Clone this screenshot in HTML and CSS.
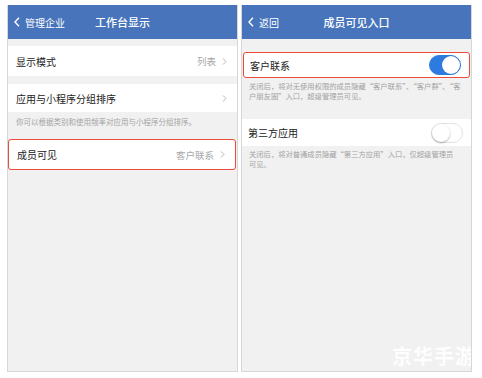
FILE: index.html
```html
<!DOCTYPE html>
<html lang="zh-CN">
<head>
    <meta charset="UTF-8">
    <meta name="viewport" content="width=device-width, initial-scale=1.0">
    <title>成员可见入口</title>
    <link rel="stylesheet" href="styles.css">
</head>
<body>
    <div class="screens">
        <div class="phone">
            <div class="nav">
                <div class="back">
                    <svg class="back-icon" width="6" height="10" viewBox="0 0 6 10"><polyline points="5,0.8 1,5 5,9.2" fill="none" stroke="#fff" stroke-width="1.4"/></svg>
                    <span>管理企业</span>
                </div>
                <div class="title">工作台显示</div>
                <div></div>
            </div>
            <div class="row row-first">
                <span class="label">显示模式</span>
                <span class="value">列表
                    <svg class="arrow" width="5" height="7" viewBox="0 0 5 7"><polyline points="1,0.5 4,3.5 1,6.5" fill="none" stroke="#b5b5b5" stroke-width="1"/></svg>
                </span>
            </div>
            <div class="row row-second">
                <span class="label">应用与小程序分组排序</span>
                <span class="value">
                    <svg class="arrow" width="5" height="7" viewBox="0 0 5 7"><polyline points="1,0.5 4,3.5 1,6.5" fill="none" stroke="#b5b5b5" stroke-width="1"/></svg>
                </span>
            </div>
            <div class="note note-left">你可以根据类别和使用频率对应用与小程序分组排序。</div>
            <div class="row row-mark">
                <span class="label">成员可见</span>
                <span class="value">客户联系
                    <svg class="arrow" width="5" height="7" viewBox="0 0 5 7"><polyline points="1,0.5 4,3.5 1,6.5" fill="none" stroke="#b5b5b5" stroke-width="1"/></svg>
                </span>
            </div>
        </div>

        <div class="phone phone-right">
            <div class="nav">
                <div class="back">
                    <svg class="back-icon" width="6" height="10" viewBox="0 0 6 10"><polyline points="5,0.8 1,5 5,9.2" fill="none" stroke="#fff" stroke-width="1.4"/></svg>
                    <span>返回</span>
                </div>
                <div class="title">成员可见入口</div>
                <div></div>
            </div>
            <div class="row row-mark row-switch first-switch">
                <span class="label">客户联系</span>
                <span class="switch on"></span>
            </div>
            <div class="note note-right">关闭后，将对无使用权限的成员隐藏“客户联系”、“客户群”、“客<br>户朋友圈”入口，超级管理员可见。</div>
            <div class="row row-switch second-switch">
                <span class="label">第三方应用</span>
                <span class="switch"></span>
            </div>
            <div class="note note-right">关闭后，将对普通成员隐藏“第三方应用”入口，仅超级管理员<br>可见。</div>
            <div class="watermark">京华手游</div>
        </div>
    </div>
</body>
</html>
```

FILE: styles.css
```css
body {
    margin: 0;
    background-color: #fff;
    font-family: "Noto Sans CJK SC", "Noto Sans", sans-serif;
    color: #222;
}
.screens {
    display: flex;
    gap: 3px;
    padding: 5px 0 0 7px;
}
.phone {
    position: relative;
    width: 229px;
    height: 366px;
    background-color: #f1f1f1;
    border: 1px solid #d6d6d6;
    border-top: none;
    overflow: hidden;
}
.nav {
    display: grid;
    grid-template-columns: 1fr auto 1fr;
    align-items: center;
    height: 34px;
    margin: 0 -1px;
    background-color: #4774ba;
    color: #fff;
}
.back {
    display: flex;
    align-items: center;
    gap: 5px;
    padding-left: 7px;
    font-size: 10px;
}
.back-icon {
    display: block;
}
.title {
    font-size: 11px;
    font-weight: 500;
}
.row {
    display: flex;
    align-items: center;
    justify-content: space-between;
    background-color: #fff;
    padding: 0 10px 0 8px;
    font-size: 10px;
}
.row-first {
    height: 30px;
    margin-top: 7px;
}
.row-second {
    height: 28px;
    margin-top: 8px;
}
.value {
    display: flex;
    align-items: center;
    gap: 6px;
    color: #a8a8a8;
    font-size: 9.5px;
}
.arrow {
    display: block;
}
.note {
    padding: 4px 10px 0 7px;
    font-size: 7.5px;
    line-height: 9.5px;
    color: #a3a3a3;
}
.note-right {
    padding-right: 1px;
    font-size: 7.3px;
    white-space: nowrap;
}
.note-left {
    padding: 5px 8px 9px 8px;
    height: 13px;
}
.row-mark {
    height: 29px;
    margin: 0 1px 0 0;
    border: 1.5px solid #ee4a3a;
    border-radius: 3px;
}
.phone-right .row {
    padding-left: 6px;
    padding-right: 8px;
}
.first-switch {
    height: 24px;
    margin: 13px 1px 0 1px;
}
.second-switch {
    height: 27px;
    margin-top: 18px;
}
.switch {
    position: relative;
    width: 30px;
    height: 18px;
    border: 1px solid #e2e2e2;
    border-radius: 10px;
    background-color: #fff;
}
.switch::after {
    content: "";
    position: absolute;
    top: 0;
    left: 0;
    width: 18px;
    height: 18px;
    border-radius: 50%;
    background-color: #fff;
    box-shadow: 0 1px 2px rgba(0,0,0,0.3);
}
.switch.on {
    background-color: #2d7be0;
    border-color: #2d7be0;
}
.switch.on::after {
    left: 12px;
    box-shadow: 0 0 1px rgba(0,0,0,0.2);
}
.watermark {
    position: absolute;
    left: 150px;
    bottom: 1px;
    font-size: 20px;
    font-weight: bold;
    letter-spacing: 1px;
    color: rgba(255,255,255,0.95);
    white-space: nowrap;
}
```
